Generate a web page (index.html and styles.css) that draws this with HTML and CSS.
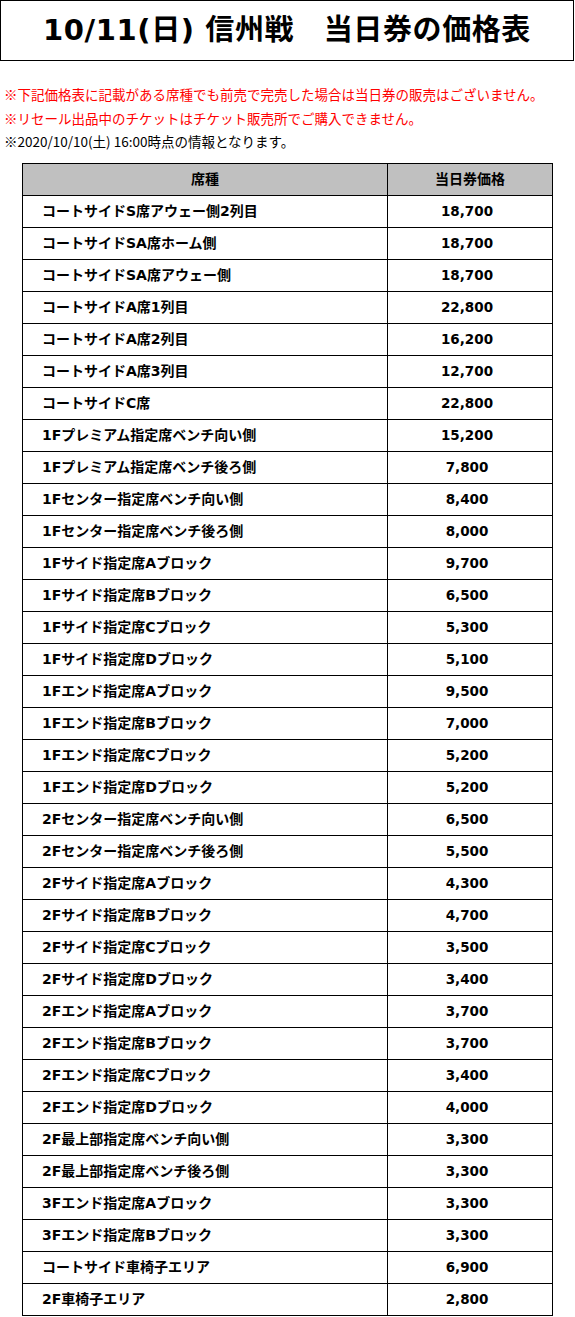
FILE: index.html
```html
<!DOCTYPE html>
<html lang="ja">
<head>
<meta charset="utf-8">
<link rel="stylesheet" href="styles.css">
</head>
<body>
<h1 class="title">10/11(日) 信州戦　当日券の価格表</h1>
<div class="notes">
  <p class="note red">※下記価格表に記載がある席種でも前売で完売した場合は当日券の販売はございません。</p>
  <p class="note red">※リセール出品中のチケットはチケット販売所でご購入できません。</p>
  <p class="note">※2020/10/10(土) 16:00時点の情報となります。</p>
</div>
<table class="price">
  <thead>
    <tr><th class="c-seat">席種</th><th class="c-price">当日券価格</th></tr>
  </thead>
  <tbody>
    <tr><td>コートサイドS席アウェー側2列目</td><td>18,700</td></tr>
    <tr><td>コートサイドSA席ホーム側</td><td>18,700</td></tr>
    <tr><td>コートサイドSA席アウェー側</td><td>18,700</td></tr>
    <tr><td>コートサイドA席1列目</td><td>22,800</td></tr>
    <tr><td>コートサイドA席2列目</td><td>16,200</td></tr>
    <tr><td>コートサイドA席3列目</td><td>12,700</td></tr>
    <tr><td>コートサイドC席</td><td>22,800</td></tr>
    <tr><td>1Fプレミアム指定席ベンチ向い側</td><td>15,200</td></tr>
    <tr><td>1Fプレミアム指定席ベンチ後ろ側</td><td>7,800</td></tr>
    <tr><td>1Fセンター指定席ベンチ向い側</td><td>8,400</td></tr>
    <tr><td>1Fセンター指定席ベンチ後ろ側</td><td>8,000</td></tr>
    <tr><td>1Fサイド指定席Aブロック</td><td>9,700</td></tr>
    <tr><td>1Fサイド指定席Bブロック</td><td>6,500</td></tr>
    <tr><td>1Fサイド指定席Cブロック</td><td>5,300</td></tr>
    <tr><td>1Fサイド指定席Dブロック</td><td>5,100</td></tr>
    <tr><td>1Fエンド指定席Aブロック</td><td>9,500</td></tr>
    <tr><td>1Fエンド指定席Bブロック</td><td>7,000</td></tr>
    <tr><td>1Fエンド指定席Cブロック</td><td>5,200</td></tr>
    <tr><td>1Fエンド指定席Dブロック</td><td>5,200</td></tr>
    <tr><td>2Fセンター指定席ベンチ向い側</td><td>6,500</td></tr>
    <tr><td>2Fセンター指定席ベンチ後ろ側</td><td>5,500</td></tr>
    <tr><td>2Fサイド指定席Aブロック</td><td>4,300</td></tr>
    <tr><td>2Fサイド指定席Bブロック</td><td>4,700</td></tr>
    <tr><td>2Fサイド指定席Cブロック</td><td>3,500</td></tr>
    <tr><td>2Fサイド指定席Dブロック</td><td>3,400</td></tr>
    <tr><td>2Fエンド指定席Aブロック</td><td>3,700</td></tr>
    <tr><td>2Fエンド指定席Bブロック</td><td>3,700</td></tr>
    <tr><td>2Fエンド指定席Cブロック</td><td>3,400</td></tr>
    <tr><td>2Fエンド指定席Dブロック</td><td>4,000</td></tr>
    <tr><td>2F最上部指定席ベンチ向い側</td><td>3,300</td></tr>
    <tr><td>2F最上部指定席ベンチ後ろ側</td><td>3,300</td></tr>
    <tr><td>3Fエンド指定席Aブロック</td><td>3,300</td></tr>
    <tr><td>3Fエンド指定席Bブロック</td><td>3,300</td></tr>
    <tr><td>コートサイド車椅子エリア</td><td>6,900</td></tr>
    <tr><td>2F車椅子エリア</td><td>2,800</td></tr>
  </tbody>
</table>
</body>
</html>
```

FILE: styles.css
```css
html, body {
  margin: 0;
  padding: 0;
  background: #ffffff;
}
body {
  font-family: "DejaVu Sans", "Noto Sans CJK JP", sans-serif;
  color: #000;
}
.title {
  box-sizing: border-box;
  width: 574px;
  height: 61px;
  margin: 0;
  border: 1px solid #000;
  font-size: 29px;
  font-weight: bold;
  line-height: 58px;
  text-align: center;
  letter-spacing: 0.6px;
}
.notes {
  margin: 22px 0 0 4px;
}
.note {
  margin: 0;
  font-family: "Noto Sans CJK JP", "Noto Sans", sans-serif;
  font-size: 13.5px;
  line-height: 23.5px;
  height: 23.5px;
  white-space: nowrap;
}
.red {
  color: #ff0000;
}
.price {
  margin: 9px 0 0 22px;
  border-collapse: collapse;
  width: 531px;
  table-layout: fixed;
}
.price th, .price td {
  border: 1px solid #000;
  height: 31px;
  padding: 0;
  font-size: 14px;
  font-weight: bold;
  line-height: 20px;
  white-space: nowrap;
}
.price th {
  background: #c0c0c0;
  text-align: center;
}
.c-seat {
  width: 364px;
}
.price td:first-child {
  padding-left: 19px;
  text-align: left;
}
.price td:last-child {
  text-align: center;
  padding-right: 6px;
  font-size: 13.5px;
}
```
